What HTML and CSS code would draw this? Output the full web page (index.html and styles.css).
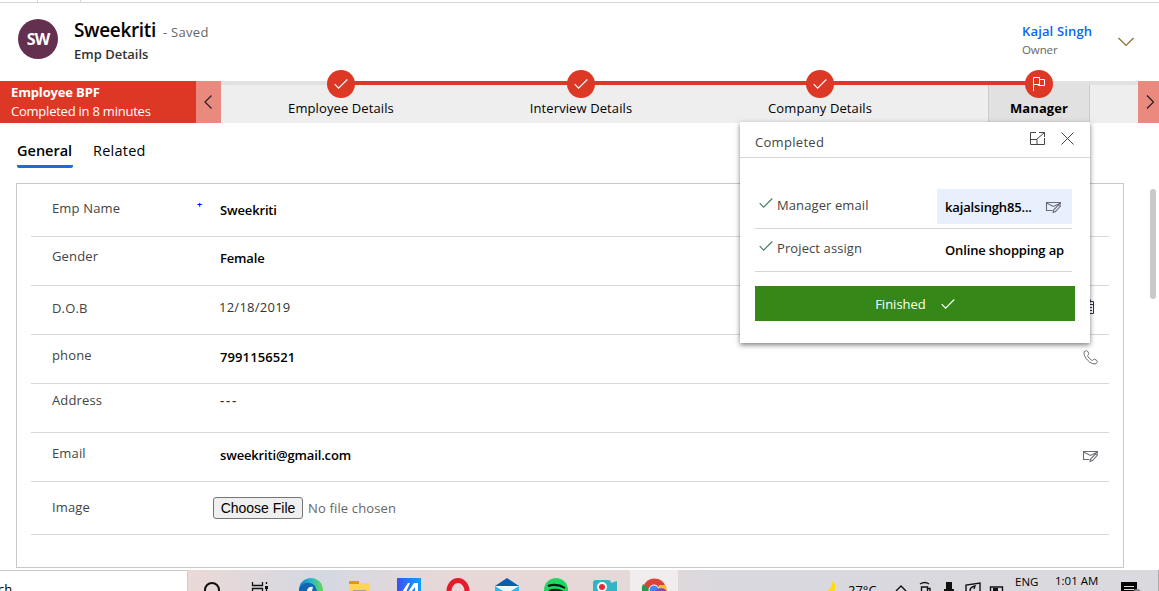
FILE: index.html
```html
<!DOCTYPE html>
<html lang="en">
<head>
<meta charset="utf-8">
<title>Emp Details: Sweekriti</title>
<link rel="stylesheet" href="styles.css">
</head>
<body>
<svg class="defs" width="0" height="0">
  <symbol id="check" viewBox="0 0 14 10"><path d="M.7 5.200 4.600 9.100 13.300.5" fill="none" stroke="currentColor" stroke-width="1.200"/></symbol>
  <symbol id="mail" viewBox="0 0 16 13"><path d="M7.500 10.500H1.500v-8h14v2M1.500 3 8.500 6.500 15.500 3M8 12.500l1-3 5-5 1.500 1.500L10.500 11.500Z" fill="none" stroke="currentColor" stroke-width="1.100"/></symbol>
</svg>

<div class="command-bar"><span class="tick"></span><span class="tick"></span></div>

<header class="record-header">
  <div class="avatar">SW</div>
  <div class="record-title">
    <div class="title-line"><h1>Sweekriti</h1><span class="saved">- Saved</span></div>
    <div class="entity">Emp Details</div>
  </div>
  <div class="owner"><a class="owner-name">Kajal Singh</a><span class="owner-label">Owner</span></div>
  <svg class="chevron-down" width="18" height="10" viewBox="0 0 18 10"><path d="M1.500 1 9 8.500 16.500 1" fill="none" stroke="#8a6d2f" stroke-width="1.2"/></svg>
</header>

<section class="process">
  <div class="process-name"><b>Employee BPF</b><span>Completed in 8 minutes</span></div>
  <div class="nav-prev"><svg width="9" height="14" viewBox="0 0 9 14"><path d="M7.500.5 1 7 7.500 13.500" fill="none" stroke="#222" stroke-width="1.2"/></svg></div>
  <div class="stages">
    <div class="stage"><span class="dot"><svg width="14" height="10"><use href="#check"/></svg></span><span class="stage-name">Employee Details</span></div>
    <div class="stage"><span class="dot"><svg width="14" height="10"><use href="#check"/></svg></span><span class="stage-name">Interview Details</span></div>
    <div class="stage"><span class="dot"><svg width="14" height="10"><use href="#check"/></svg></span><span class="stage-name">Company Details</span></div>
    <div class="stage active"><span class="dot"><svg width="14" height="14" viewBox="0 0 14 14"><path d="M1.500 14V.5h6v7h-6M7.500 2.500h5v6h-6v-1" fill="none" stroke="#fff"/></svg></span><span class="stage-name">Manager</span></div>
  </div>
  <div class="nav-next"><svg width="9" height="14" viewBox="0 0 9 14"><path d="M1 .5 7.500 7 1 13.500" fill="none" stroke="#222" stroke-width="1.2"/></svg></div>
</section>

<nav class="tabs"><a class="tab selected">General</a><a class="tab related">Related</a></nav>

<main class="body">
  <div class="form">
    <div class="row name-row"><label>Emp Name</label><span class="required">+</span><span class="value strong">Sweekriti</span></div>
    <div class="row"><label>Gender</label><span></span><span class="value strong">Female</span></div>
    <div class="row dob-row"><label>D.O.B</label><span></span><span class="value date">12/18/2019</span>
      <svg width="15" height="16" viewBox="0 0 15 16"><path d="M.5 2.500h10v12H.5ZM.5 5.500h10M7.500.5v3M6 8.500h3M6 11.500h3" fill="none" stroke="#3b2c4a"/></svg></div>
    <div class="row phone-row"><label>phone</label><span></span><span class="value strong phone">7991156521</span>
      <svg width="15" height="15" viewBox="0 0 15 15"><path d="M3.500.6 1.300 1.500C-.8 6.500 8 15.500 13 13.700l1.400-2.100c.2-.9-2.800-2.900-3.600-2.400L9.500 10.500C8 10.300 4.700 7 4.600 5.500l1.100-1.200C6.200 3.500 4.500.5 3.500.6Z" fill="none" stroke="#6b6d76"/></svg></div>
    <div class="row address-row"><label>Address</label><span></span><span class="value strong dashes">---</span></div>
    <div class="row email-row"><label>Email</label><span></span><span class="value strong">sweekriti@gmail.com</span>
      <svg class="grey" width="16" height="13"><use href="#mail"/></svg></div>
    <div class="row image-row"><label>Image</label><span></span><span class="file"><button>Choose File</button><span class="no-file">No file chosen</span></span></div>
  </div>
  <div class="scroll-thumb"></div>
</main>

<aside class="flyout">
  <div class="flyout-head"><span class="flyout-title">Completed</span>
    <svg width="15" height="13" viewBox="0 0 15 13"><path d="M6 .5H.5v12h14V6M9 .5h5.500V5M14.500.5 7 7M.5 7.500H7v5" fill="none" stroke="#444"/></svg>
    <svg width="13" height="13" viewBox="0 0 13 13"><path d="M.5.5l12 12M12.500.5l-12 12" fill="none" stroke="#444"/></svg>
  </div>
  <div class="step-row first"><svg width="14" height="10"><use href="#check"/></svg><span class="step-label">Manager email</span>
    <div class="step-field filled"><span class="clip">kajalsingh85...</span><svg class="grey" width="16" height="13"><use href="#mail"/></svg></div></div>
  <div class="step-row second"><svg width="14" height="10"><use href="#check"/></svg><span class="step-label">Project assign</span>
    <div class="step-field"><span class="clip">Online shopping ap</span></div></div>
  <div class="finished"><span>Finished</span><svg width="14" height="10"><use href="#check"/></svg></div>
</aside>

<footer class="taskbar">
  <div class="search">ch</div>
  <svg class="apps" width="491" height="21" viewBox="187 570 491 21">
    <defs><linearGradient id="edge"><stop stop-color="#1674c8"/><stop offset=".5" stop-color="#27b9c8"/><stop offset="1" stop-color="#65d94e"/></linearGradient>
    <linearGradient id="blue"><stop stop-color="#4050ef"/><stop offset="1" stop-color="#0aa0ff"/></linearGradient></defs>
    <path d="M630 570h48v21h-48z" fill="#f1edef"/>
    <circle cx="212" cy="590" r="7" fill="none" stroke="#111" stroke-width="2"/>
    <path d="M252.500 582v3.500h10V582M252.500 591v-2.500h10v2.500M266.500 582v2M266.500 589v2" fill="none" stroke="#111" stroke-width="1.300"/><path d="M265 586h3v3h-3z" fill="#111"/>
    <circle cx="311" cy="590" r="12" fill="url(#edge)"/><path d="M299 591c1-8 10-11 16-5l2 5Z" fill="#1265b2"/><path d="M307 591c0-3 3-5 6-4l-1 4Z" fill="#e9f3fa"/>
    <path d="M349 581h10l2 2h9v8h-21z" fill="#ffd45e"/><path d="M349 581h10v3h-10z" fill="#dc9a10"/><path d="M353 590h13v1h-13z" fill="#9aa98d"/>
    <path d="M397 578h24v13h-24z" fill="url(#blue)"/><path d="M402 592l6-9h2l-4 9zM408 592l6-9h4v9h-3v-5l-4 5z" fill="#fff"/>
    <ellipse cx="458" cy="591" rx="9" ry="10.500" fill="none" stroke="#e51b2b" stroke-width="5"/>
    <path d="M495 586l12-8 12 8z" fill="#0860ad"/><path d="M495 586h24v5h-24z" fill="#f3f7fb"/><path d="M495 586l8 5h-8zM519 586l-8 5h8z" fill="#33b4f3"/>
    <circle cx="556" cy="590" r="12" fill="#1ed760"/><path d="M548 586q9-3 17 2M549 591q8-3 14 1" fill="none" stroke="#111" stroke-width="2"/>
    <path d="M593 583q0-3 3-3h12q3 0 3 3l6-2v10h-24z" fill="#31b4c4"/><circle cx="602" cy="587" r="5" fill="#fff"/><circle cx="602" cy="587" r="3" fill="#e32d35"/>
    <path d="M643 587a12 12 0 0 1 23 0l-11 4z" fill="#dc4437"/><path d="M643 584q-2 3-1 7h10z" fill="#2b9850"/><path d="M659 585h7l1 6h-9z" fill="#f6bd31"/><circle cx="654" cy="590" r="5" fill="#4285f4" stroke="#fff"/><circle cx="661" cy="595" r="7" fill="#8149b8"/>
  </svg>
  <div class="tray">
    <svg width="12" height="21" viewBox="0 0 12 21"><path d="M5 11q6 5 2 10H0q6-3 5-10Z" fill="#ffdc08"/></svg>
    <span class="temp">27°C</span>
    <svg class="tray-icons" width="112" height="21" viewBox="894 570 112 21"><path d="M896 591l5-5 5 5M920 584q5-3 9 0M921.500 591v-4h6v4M928 588.500h2v3M966 591v-6l14-2v8M970 591q0-4 5-5l-1 3M990.500 591v-4h12v4" fill="none" stroke="#111" stroke-width="1.400"/><path d="M946 582h6v9h-6zM944 589h10v2h-10zM993 588h5v3h-5z" fill="#111"/></svg>
    <span class="lang">ENG</span><span class="clock">1:01 AM</span>
    <svg class="action" width="22" height="21" viewBox="1120 570 22 21"><path d="M1121 582h16v9h-16z" fill="#050505"/><path d="M1124 586.500h10M1124 589.500h10" stroke="#ddd"/><circle cx="1137" cy="593" r="4" fill="#888"/></svg>
  </div>
</footer>
</body>
</html>
```

FILE: styles.css
```css
* { box-sizing: border-box; }
body { margin: 0; width: 1159px; height: 591px; overflow: hidden; position: relative; background: #fff; color: #000;
  display: flex; flex-direction: column; font: 13px/18px "Open Sans", sans-serif; }
svg { display: block; flex: none; }
.defs { position: absolute; }
.grey { color: #6b6d76; }

.command-bar { height: 3px; flex: none; display: flex; border-bottom: 1px solid #d6d6d6; }
.tick { width: 38px; border-right: 1px solid #d6d6d6; }
.tick + .tick { width: 43px; }

.record-header { height: 78px; flex: none; display: flex; align-items: flex-start; padding: 16px 24px 0 18px; }
.avatar { width: 40px; height: 40px; border-radius: 50%; background: #63304f; color: #fff; text-align: center;
  font-size: 16px; line-height: 40px; font-weight: 700; letter-spacing: -.9px; }
.record-title { margin-left: 16px; flex: 1; }
.title-line { display: flex; align-items: baseline; height: 24px; }
h1 { margin: 0; font-size: 19px; line-height: 23px; font-weight: 600; letter-spacing: -.35px; }
.saved { margin-left: 7px; color: #666; letter-spacing: .3px; }
.entity { margin-top: 2px; color: #333; font-weight: 600; letter-spacing: 0; }
.owner { width: 95px; display: flex; flex-direction: column; padding-top: 3px; }
.owner-name { color: #0f62fe; font-weight: 600; letter-spacing: .15px; }
.owner-label { color: #666; font-size: 11.5px; line-height: 19px; letter-spacing: -.1px; }
.chevron-down { margin-top: 18px; }

.process { height: 42px; flex: none; display: flex; }
.process-name { width: 196px; background: #dc3825; color: #fff; padding: 2px 0 0 11px; display: flex; flex-direction: column; }
.process-name b { font-weight: 700; line-height: 18px; letter-spacing: -.15px; }
.process-name span { line-height: 20px; letter-spacing: -.23px; }
.nav-prev, .nav-next { background: #ea897d; display: flex; align-items: center; justify-content: center; }
.nav-prev { width: 25px; padding-right: 1px; }
.nav-next { width: 21px; padding-left: 3px; }
.stages { width: 917px; display: grid; grid-template-columns: 240px 240px 238px 151px;
  background: linear-gradient(to right, #e1e1e1 120px, #dc3825 120px 818px, #e1e1e1 818px) top / 100% 4px no-repeat #eee; }
.stage { display: flex; flex-direction: column; align-items: center; margin-top: 4px; }
.active { margin-left: 49px; background: #e1e1e1; border: solid #ccc; border-width: 0 1px; }
.dot { width: 28px; height: 28px; border-radius: 50%; margin-top: -15px; background: #dc3825; color: #fff;
  display: flex; align-items: center; justify-content: center; }
.stage-name { line-height: 20px; white-space: nowrap; letter-spacing: .1px; }
.active .stage-name { font-weight: 700; }

.tabs { height: 60px; flex: none; display: flex; align-items: flex-start; padding: 17px 17px 0; gap: 20px; font-size: 14.500px; line-height: 22px; }
.tab { height: 28px; }
.selected { width: 56px; font-weight: 600; border-bottom: 3px solid #2266e3; border-radius: 0 0 2px 2px; }
.related { letter-spacing: .25px; }

.body { height: 387px; flex: none; display: flex; padding-left: 16px; }
.form { width: 1108px; height: 385px; border: 1px solid #c8c8c8; padding: 0 14px; }
.row { height: 49px; border-bottom: 1px solid #d8d8d8; display: grid; grid-template-columns: 145px 23px 1fr auto;
  padding: 10px 11px 0 21px; align-items: start; }
.row label { color: #444; letter-spacing: .15px; }
.value { padding-top: 2px; }
.strong { font-weight: 600; letter-spacing: -.15px; }
.name-row { height: 53px; padding-top: 15px; }
.required { color: #00f; font-size: 9px; line-height: 12px; font-weight: 700; }
.dob-row { padding-top: 13px; }
.date { padding: 0; margin: -1px 0 0 -1px; color: #333; letter-spacing: .25px; }
.phone-row { padding-top: 11px; }
.phone { letter-spacing: .1px; }
.phone-row svg { margin-top: 4px; }
.address-row { padding-top: 7px; }
.dashes { padding-top: 0; letter-spacing: 1.800px; color: #333; }
.email-row { padding-top: 11px; }
.email-row svg { margin-top: 5px; }
.image-row { height: 53px; padding-top: 15px; }
.image-row label { padding-top: 1px; }
.file { display: flex; margin-left: -7px; gap: 5px; color: #666; line-height: 22px; letter-spacing: .15px; }
.file button { width: 90px; height: 22px; padding: 0; border: 1px solid #767676; border-radius: 3px; background: #efefef; color: #000;
  font: 14px/20px "Liberation Sans", sans-serif; }
.scroll-thumb { width: 6px; height: 110px; margin: 6px 0 0 26px; border-radius: 3px; background: #c9c9c9; }

.flyout { position: absolute; left: 740px; top: 122px; width: 350px; height: 221px; background: #fff; box-shadow: 0 2px 5px rgba(0,0,0,.5); color: #444; }
.flyout-head { height: 36px; border-bottom: 1px solid #d6d6d6; display: flex; align-items: center; padding: 0 16px 2px 15px; gap: 16px; margin-bottom: 28px; }
.flyout-title { flex: 1; padding-top: 6px; letter-spacing: .3px; }
.step-row { width: 317px; height: 43px; margin-left: 15px; border-bottom: 1px solid #d6d6d6; display: flex; padding: 0 0 4px 4px; }
.step-row > svg { margin-top: 12px; color: #458064; }
.step-label { padding: 10px 0 0 4px; flex: 1; letter-spacing: .1px; }
.step-field { width: 135px; height: 35px; padding: 0 11px 0 8px; display: flex; align-items: center; justify-content: space-between; color: #000; }
.first { padding-top: 3px; }
.first > svg { margin-top: 9px; }
.first .step-label { padding-top: 7px; }
.filled { background: #e8effd; }
.clip { white-space: nowrap; font-weight: 600; letter-spacing: -.15px; }
.second .step-field { padding-right: 8px; margin-top: 3px; }
.finished { width: 320px; height: 35px; margin: 14px 0 0 15px; background: #358718; color: #fff; display: flex; align-items: center; justify-content: center; gap: 15px; }

.taskbar { height: 21px; flex: none; overflow: hidden; display: flex; background: linear-gradient(to right, #ebd9d6 187px, #d4d8e2 320px, #e7d8d7 450px, #e5d8d8 630px, #d9d8df 720px, #dad9de); }
.search { width: 188px; background: #fff; border: solid #ccc; border-width: 1px 1px 0 0; padding-top: 9px; text-indent: -2px; }
.apps { margin-left: -1px; }
.tray { flex: 1; display: flex; padding-left: 149px; border-right: 1px solid #aaa; }
.temp { width: 46px; padding: 11px 0 0 9px; font-size: 13px; }
.tray-icons { margin-left: 9px; }
.lang { width: 40px; padding-left: 9px; line-height: 23px; font-size: 11.500px; }
.clock { width: 74px; padding-left: 9px; line-height: 22px; font-size: 11.500px; white-space: nowrap; }
```
